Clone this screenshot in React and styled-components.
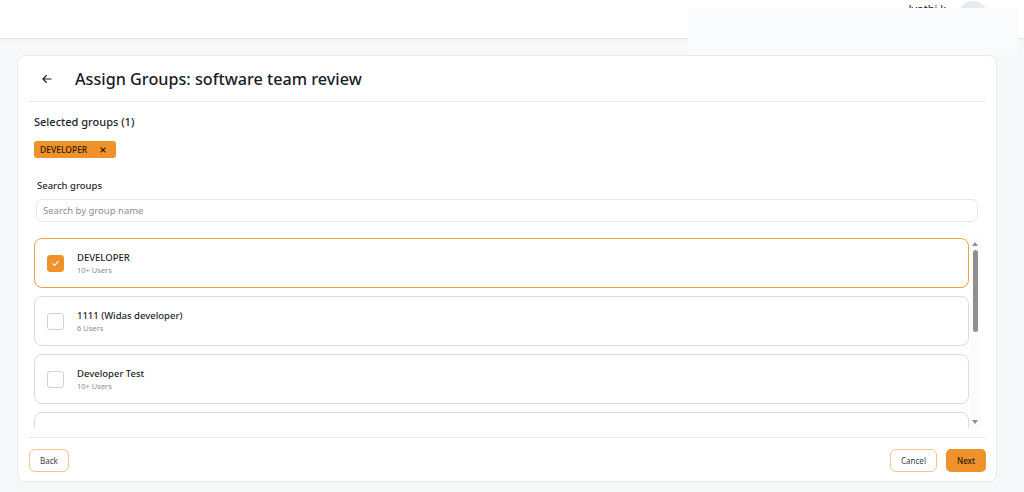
import React, { useState } from 'react';
import styled, { createGlobalStyle } from 'styled-components';

const GlobalStyle = createGlobalStyle`
  html, body {
    margin: 0;
    padding: 0;
    background: #f7f8fa;
    font-family: "Noto Sans", "Open Sans", sans-serif;
    color: #1d1f2b;
  }
  * { box-sizing: border-box; }
`;

const groups = [
  { id: 1, name: 'DEVELOPER', users: '10+ Users' },
  { id: 2, name: '1111 (Widas developer)', users: '6 Users' },
  { id: 3, name: 'Developer Test', users: '10+ Users' },
  { id: 4, name: 'QA Team', users: '4 Users' },
];

function App() {
  const [selected, setSelected] = useState([1]);

  const toggle = (id) =>
    setSelected((s) => (s.includes(id) ? s.filter((x) => x !== id) : [...s, id]));

  return (
    <Page>
      <GlobalStyle />
      <TopBar>
        <UserName>Jyothi k</UserName>
        <Avatar />
      </TopBar>
      <Popover />

      <Main>
        <Card>
          <CardHeader>
            <BackArrow viewBox="0 0 24 24">
              <path d="M19 12H5M11 6l-6 6 6 6" />
            </BackArrow>
            <Title>Assign Groups: software team review</Title>
          </CardHeader>

          <Body>
            <SectionLabel>Selected groups ({selected.length})</SectionLabel>
            <Chips>
              {groups
                .filter((g) => selected.includes(g.id))
                .map((g) => (
                  <Chip key={g.id}>
                    {g.name}
                    <ChipClose viewBox="0 0 10 10" onClick={() => toggle(g.id)}>
                      <path d="M2 2l6 6M8 2l-6 6" />
                    </ChipClose>
                  </Chip>
                ))}
            </Chips>

            <FieldLabel>Search groups</FieldLabel>
            <SearchInput placeholder="Search by group name" />

            <ListArea>
              <List>
                {groups.map((g) => {
                  const on = selected.includes(g.id);
                  return (
                    <GroupRow key={g.id} $active={on} onClick={() => toggle(g.id)}>
                      <Check $checked={on}>
                        {on && (
                          <svg viewBox="0 0 12 12">
                            <path d="M3 6.2l2 2 4-4.4" />
                          </svg>
                        )}
                      </Check>
                      <GroupText>
                        <GroupName>{g.name}</GroupName>
                        <GroupUsers>{g.users}</GroupUsers>
                      </GroupText>
                    </GroupRow>
                  );
                })}
              </List>
              <ScrollTrack>
                <ScrollArrow $dir="up" />
                <ScrollThumb />
                <ScrollSpace />
                <ScrollArrow $dir="down" />
              </ScrollTrack>
            </ListArea>
          </Body>

          <Footer>
            <OutlineButton $width="40px">Back</OutlineButton>
            <FooterRight>
              <OutlineButton $width="47px">Cancel</OutlineButton>
              <PrimaryButton>Next</PrimaryButton>
            </FooterRight>
          </Footer>
        </Card>
      </Main>
    </Page>
  );
}

export default App;

const Page = styled.div`
  width: 1024px;
  height: 492px;
  position: relative;
  overflow: hidden;
  display: flex;
  flex-direction: column;
`;

const TopBar = styled.div`
  height: 39px;
  background: #ffffff;
  border-bottom: 1px solid #e6e8ec;
  box-shadow: 0 1px 2px rgba(0, 0, 0, 0.03);
  display: flex;
  justify-content: flex-end;
  align-items: flex-start;
  padding: 0 36px 0 0;
  gap: 12px;
`;

const UserName = styled.span`
  font-size: 11px;
  line-height: 1;
  margin-top: 3px;
  color: #222;
`;

const Avatar = styled.div`
  width: 30px;
  height: 30px;
  border-radius: 50%;
  background: #e9eaee;
  margin-top: 1px;
`;

const Popover = styled.div`
  position: absolute;
  top: 8px;
  left: 688px;
  width: 330px;
  height: 47px;
  background: #fafbfc;
  z-index: 5;
`;

const Main = styled.main`
  flex: 1;
  padding: 16px 27px 10px 17px;
  display: flex;
`;

const Card = styled.section`
  flex: 1;
  background: #ffffff;
  border: 1px solid #e8e9ed;
  border-radius: 8px;
  padding: 0 11px;
  display: flex;
  flex-direction: column;
`;

const CardHeader = styled.header`
  height: 46px;
  display: flex;
  align-items: center;
  gap: 21px;
  padding-left: 11px;
  border-bottom: 1px solid #e8e9ed;
`;

const BackArrow = styled.svg`
  width: 14px;
  height: 14px;
  fill: none;
  stroke: #222;
  stroke-width: 2;
  stroke-linecap: round;
  stroke-linejoin: round;
`;

const Title = styled.h1`
  margin: 0;
  font-size: 16.2px;
  font-weight: 500;
  color: #1a1c28;
`;

const Body = styled.div`
  display: flex;
  flex-direction: column;
  padding: 12px 7px 0 5px;
`;

const SectionLabel = styled.div`
  font-size: 11px;
  font-weight: 500;
  line-height: 16px;
  color: #1d1f2b;
`;

const Chips = styled.div`
  display: flex;
  gap: 6px;
  margin-top: 11px;
`;

const Chip = styled.span`
  height: 17px;
  padding: 0 9px 0 6px;
  display: inline-flex;
  align-items: center;
  gap: 12px;
  background: #f0922b;
  border-radius: 3px;
  font-size: 8.5px;
  font-weight: 500;
  color: #2a1a08;
`;

const ChipClose = styled.svg`
  width: 8px;
  height: 8px;
  stroke: #2a1a08;
  stroke-width: 1.4;
  cursor: pointer;
`;

const FieldLabel = styled.label`
  margin-top: 21px;
  padding-left: 3px;
  font-size: 9.5px;
  font-weight: 500;
  line-height: 14px;
  color: #1d1f2b;
`;

const SearchInput = styled.input`
  margin: 6px 0 0 2px;
  height: 23px;
  border: 1px solid #e6e7eb;
  border-radius: 6px;
  padding: 0 6px;
  font-family: inherit;
  font-size: 9.5px;
  outline: none;
  color: #222;

  &::placeholder {
    color: #8a8d96;
  }
`;

const ListArea = styled.div`
  margin: 16px -2px 0 0;
  height: 190px;
  display: flex;
  gap: 1px;
`;

const List = styled.div`
  flex: 1;
  display: flex;
  flex-direction: column;
  gap: 8px;
  overflow: hidden;
`;

const GroupRow = styled.div`
  flex: 0 0 50px;
  display: flex;
  align-items: center;
  gap: 13px;
  padding-left: 12px;
  border: 1px solid ${(p) => (p.$active ? '#f0a03c' : '#d9dbe0')};
  border-radius: 8px;
  cursor: pointer;
`;

const Check = styled.span`
  width: 17px;
  height: 17px;
  border-radius: 3px;
  border: 1px solid ${(p) => (p.$checked ? '#f0922b' : '#cfd1d6')};
  background: ${(p) => (p.$checked ? '#f0922b' : '#fff')};
  display: flex;
  align-items: center;
  justify-content: center;

  svg {
    width: 11px;
    height: 11px;
    fill: none;
    stroke: #fff;
    stroke-width: 1.2;
    stroke-linecap: round;
    stroke-linejoin: round;
  }
`;

const GroupText = styled.div`
  display: flex;
  flex-direction: column;
  gap: 1px;
`;

const GroupName = styled.span`
  font-size: 9.5px;
  font-weight: 500;
  color: #1d1f2b;
  line-height: 13px;
`;

const GroupUsers = styled.span`
  font-size: 7.5px;
  color: #8a8d96;
  line-height: 10px;
`;

const ScrollTrack = styled.div`
  width: 10px;
  display: flex;
  flex-direction: column;
  align-items: center;
  background: #fbfbfb;
`;

const ScrollArrow = styled.span`
  width: 0;
  height: 0;
  margin: 4px 0;
  border-left: 3px solid transparent;
  border-right: 3px solid transparent;
  ${(p) =>
    p.$dir === 'up'
      ? 'border-bottom: 4px solid #8f8f8f;'
      : 'border-top: 4px solid #8f8f8f;'}
`;

const ScrollThumb = styled.span`
  width: 5px;
  height: 82px;
  border-radius: 3px;
  background: #8f8f8f;
`;

const ScrollSpace = styled.span`
  flex: 1;
`;

const Footer = styled.footer`
  margin: 9px -1px 0 0;
  border-top: 1px solid #e8e9ed;
  padding-top: 11px;
  display: flex;
  justify-content: space-between;
  align-items: flex-start;
`;

const FooterRight = styled.div`
  display: flex;
  gap: 9px;
`;

const OutlineButton = styled.button`
  height: 23px;
  width: ${(p) => p.$width};
  padding: 0;
  border: 1px solid #f2c48e;
  border-radius: 6px;
  background: #fff;
  font-family: inherit;
  font-size: 8px;
  color: #3a3c46;
  cursor: pointer;
`;

const PrimaryButton = styled.button`
  height: 23px;
  width: 40px;
  padding: 0;
  border: none;
  border-radius: 5px;
  background: #f0922b;
  font-family: inherit;
  font-size: 8px;
  font-weight: 500;
  color: #2a1a08;
  cursor: pointer;
`;
